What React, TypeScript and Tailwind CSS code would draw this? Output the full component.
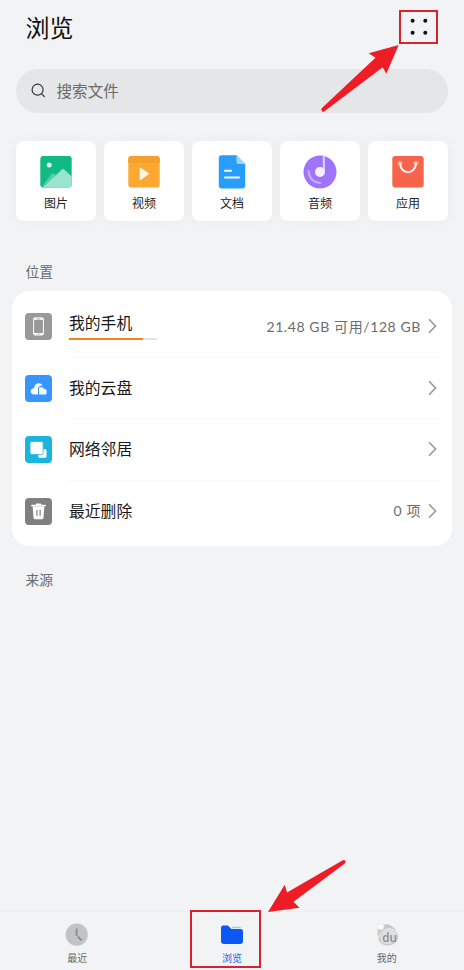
import type { ReactNode } from 'react';

const categories = [
  { label: '图片', icon: <PictureIcon /> },
  { label: '视频', icon: <VideoIcon /> },
  { label: '文档', icon: <DocumentIcon /> },
  { label: '音频', icon: <AudioIcon /> },
  { label: '应用', icon: <AppIcon /> },
];

function PictureIcon() {
  return (
    <svg width="34" height="34" viewBox="0 0 34 34">
      <rect x="1.3" y="1" width="31.4" height="31.4" rx="3" fill="#0fbb83" />
      <path d="M4 30.5 L12.5 19 Q13.8 17.5 15.2 18.8 L19 22 L12 32.4 H4Z" fill="#52cfa4" />
      <path d="M4 32.4 L22.3 15 Q24 13.2 25.7 15 L32.7 21.5 V29.4 Q32.7 32.4 29.7 32.4Z" fill="#98e4cc" />
      <circle cx="10.2" cy="10" r="2.5" fill="#e2f8f0" />
    </svg>
  );
}

function VideoIcon() {
  return (
    <svg width="34" height="34" viewBox="0 0 34 34">
      <rect x="1.3" y="1" width="31.4" height="31.4" rx="3" fill="#fca831" />
      <path d="M1.3 8 V4 Q1.3 1 4.3 1 H29.7 Q32.7 1 32.7 4 V8Z" fill="#f79f2c" />
      <path d="M13.3 13.3 L21.5 18.8 L13.3 24.5Z" fill="#fff6e6" stroke="#fff6e6" strokeWidth="1.2" strokeLinejoin="round" />
    </svg>
  );
}

function DocumentIcon() {
  return (
    <svg width="34" height="34" viewBox="0 0 34 34">
      <path d="M6.8 0.3 H21.5 L30.2 9 V30.5 Q30.2 33.5 27.2 33.5 H6.8 Q3.8 33.5 3.8 30.5 V3.3 Q3.8 0.3 6.8 0.3Z" fill="#279dfc" />
      <path d="M21.5 0 L30.5 9 H23.5 Q21.5 9 21.5 7Z" fill="#9ed5fc" />
      <path d="M10 15.8 H16 M10 22.6 H24" stroke="#fff" strokeWidth="2" strokeLinecap="round" />
    </svg>
  );
}

function AudioIcon() {
  return (
    <svg width="34" height="34" viewBox="0 0 34 34">
      <circle cx="17" cy="17" r="16.5" fill="#9e75fa" />
      <path d="M5.6 16 Q6 26.8 17.3 28" fill="none" stroke="#c4abfc" strokeWidth="2.2" strokeLinecap="round" />
      <path d="M19.8 0.8 L22 1.4 V17 H19.8Z" fill="#dacbfd" />
      <circle cx="17" cy="17" r="5" fill="#f5eeff" />
    </svg>
  );
}

function AppIcon() {
  return (
    <svg width="34" height="34" viewBox="0 0 34 34">
      <rect x="1.3" y="1" width="31.4" height="31.4" rx="3" fill="#f7634b" />
      <circle cx="9" cy="8.3" r="2.5" fill="#fc9c88" />
      <circle cx="25" cy="8.3" r="2.5" fill="#fc9c88" />
      <path d="M9 8.5 C10 20 24 20 25 8.5" fill="none" stroke="#fff1ec" strokeWidth="2.1" strokeLinecap="round" />
    </svg>
  );
}

function PhoneIcon() {
  return (
    <svg width="27" height="27" viewBox="0 0 27 27">
      <rect width="27" height="27" rx="4" fill="#999" />
      <rect x="8.6" y="4.8" width="9.8" height="17.2" rx="1.5" fill="none" stroke="#fff" strokeWidth="1" />
      <path d="M8.6 6 H18.4 M8.6 20.9 H18.4" stroke="#fff" strokeWidth="1.7" />
      <path d="M12.3 5.9 H14.7 M12.7 21 H14.3" stroke="#999" strokeWidth="0.9" />
    </svg>
  );
}

function CloudIcon() {
  return (
    <svg width="27" height="27" viewBox="0 0 27 27">
      <rect width="27" height="27" rx="4" fill="#3795fb" />
      <path d="M13 19.5 H9.2 C4.5 19.5 4.6 13.4 9 13 C9.7 7.3 16 6.9 17.4 10.6 C14.7 10.4 13.1 11.8 13 14Z" fill="#fff" />
      <path d="M14 19.5 V13.4 Q14 12.3 15.1 12.3 H17.7 L19.4 14.3 H20.3 Q21.5 14.3 21.5 15.5 V18.3 Q21.5 19.5 20.3 19.5Z" fill="#fff" />
    </svg>
  );
}

function NetworkIcon() {
  return (
    <svg width="27" height="27" viewBox="0 0 27 27">
      <rect width="27" height="27" rx="4" fill="#1ab5df" />
      <rect x="13.3" y="13.3" width="8.2" height="8.5" rx="1.2" fill="#fff" />
      <rect x="5" y="5.4" width="13.2" height="13.2" rx="1.8" fill="#fff" stroke="#1ab5df" strokeWidth="0.8" />
    </svg>
  );
}

function TrashIcon() {
  return (
    <svg width="27" height="27" viewBox="0 0 27 27">
      <rect width="27" height="27" rx="4" fill="#808080" />
      <path d="M7 7.6 H20" stroke="#fff" strokeWidth="1.8" strokeLinecap="round" />
      <path d="M10.5 7 L11.4 5.5 H15.6 L16.5 7Z" fill="#fff" />
      <path d="M7.7 8.5 H19.3 L18.5 19.8 Q18.4 21.2 17 21.2 H10 Q8.6 21.2 8.5 19.8Z" fill="#fff" />
      <path d="M11.9 12 V17.7 M15.1 12 V17.7" stroke="#777" strokeWidth="1.1" />
    </svg>
  );
}

function Chevron() {
  return (
    <svg width="9" height="16" viewBox="0 0 9 16" className="ml-[7px]">
      <path d="M1 1.2 L7.6 8 L1 14.8" fill="none" stroke="#959595" strokeWidth="1.5" />
    </svg>
  );
}

type RowProps = {
  icon: ReactNode;
  label: string;
  value?: string;
  progress?: number;
  last?: boolean;
};

function LocationRow({ icon, label, value, progress, last }: RowProps) {
  return (
    <div className="flex h-[61.5px] items-center pl-[13px] pr-3">
      {icon}
      <div
        className={`ml-[17px] flex h-full flex-1 items-center justify-between border-b pr-[3px] ${
          last ? 'border-transparent' : 'border-[#f8f8f8]'
        }`}
      >
        <div>
          <div className="text-[15.8px] leading-5 text-[#181818]">{label}</div>
          {progress !== undefined && (
            <div className="mt-[5px] h-0.5 w-[88px] bg-[#e3e3e3]">
              <div className="h-full bg-[#fa8019]" style={{ width: `${progress}%` }} />
            </div>
          )}
        </div>
        <div className="flex items-center text-[14px] text-[#6c6c6c]">
          {value && <span className="font-[Lato,'Noto_Sans_CJK_SC',sans-serif] tracking-[0.6px]">{value}</span>}
          <Chevron />
        </div>
      </div>
    </div>
  );
}

function ClockIcon() {
  return (
    <svg width="24" height="24" viewBox="0 0 24 24">
      <circle cx="11.7" cy="11.7" r="11.1" fill="#c1c3c4" />
      <path d="M11.6 5.5 V13" stroke="#86888a" strokeWidth="1.8" />
      <path d="M12.8 13.6 L16.6 17.4" stroke="#86888a" strokeWidth="2" />
    </svg>
  );
}

function FolderIcon() {
  return (
    <svg width="24" height="24" viewBox="0 0 24 24">
      <path d="M11.5 3.8 H19.5 Q21 3.8 21 5.2 H12.5Z" fill="#a9c5fb" />
      <path d="M1 5 Q1 2.6 3.4 2.6 H7.2 Q8.2 2.6 8.9 3.4 L11.3 6 H20.6 Q23 6 23 8.4 V18.6 Q23 21 20.6 21 H3.4 Q1 21 1 18.6Z" fill="#0b58f5" />
    </svg>
  );
}

function ProfileIcon() {
  return (
    <svg width="28" height="28" viewBox="0 0 28 28">
      <path d="M5 8 Q6 3 15 3.3 Q21 5 25 13 C26 20 21 24.5 14.5 24.5 C7 24.5 3 18 5 8Z" fill="#c6c7c8" />
      <circle cx="7.8" cy="5.6" r="3.2" fill="#fafafa" stroke="#e2e3e4" strokeWidth="0.6" />
      <path d="M7 17 Q9 10 15.5 8.5 Q21 8.5 24.5 14 L22 20.5 Q15 25 8.5 21.5Z" fill="#dfe0e1" />
      <path d="M5 17.5 Q7 10 15.5 7.5 Q22 8 26 14" fill="none" stroke="#f6f7f8" strokeWidth="1" />
      <text
        x="9.3"
        y="20.5"
        fontSize="13"
        fontWeight="600"
        fontFamily="Open Sans, sans-serif"
        fill="#8c8d8e"
        textLength="14.8"
        lengthAdjust="spacingAndGlyphs"
      >
        du
      </text>
    </svg>
  );
}

function NavItem({ icon, label, active }: { icon: ReactNode; label: string; active?: boolean }) {
  return (
    <div className="flex flex-1 flex-col items-center">
      <div className="flex h-7 items-center">{icon}</div>
      <span className={`mt-px text-[10px] leading-4 ${active ? 'text-[#2464ee]' : 'text-[#666]'}`}>{label}</span>
    </div>
  );
}

export default function App() {
  return (
    <div className="relative flex h-[970px] w-[464px] flex-col overflow-hidden bg-[#f1f3f5] font-['Noto_Sans_CJK_SC',sans-serif]">
      {/* Header */}
      <header className="flex h-[69px] items-start justify-between pl-[25.5px] pr-[26px] pt-[10px]">
        <h1 className="-mt-px text-2xl leading-9 text-[#111]">浏览</h1>
        <button className="flex h-[34px] w-[39px] items-center justify-center border-2 border-[#d8232f]">
          <svg width="20" height="20" viewBox="0 0 20 20" fill="#111">
            <circle cx="3.6" cy="3.8" r="2" />
            <circle cx="16.3" cy="3.8" r="2" />
            <circle cx="3.6" cy="15.8" r="2" />
            <circle cx="16.3" cy="15.8" r="2" />
          </svg>
        </button>
      </header>

      {/* Search */}
      <div className="mx-4 flex h-11 items-center rounded-full bg-[#e5e6e8] pl-[15px]">
        <svg width="16" height="16" viewBox="0 0 16 16" fill="none" stroke="#333" strokeWidth="1.2" strokeLinecap="round">
          <circle cx="6.6" cy="6.7" r="5.5" />
          <path d="M10.7 10.9 L13.4 13.6" />
        </svg>
        <span className="ml-[9.5px] text-[15.6px] text-[#6b6b6b]">搜索文件</span>
      </div>

      {/* Categories */}
      <div className="mx-4 mt-7 flex gap-2">
        {categories.map((item) => (
          <div
            key={item.label}
            className="flex h-20 w-20 flex-col items-center rounded-lg bg-white pt-[14px] shadow-[0_0_12px_rgba(0,0,0,0.04)]"
          >
            {item.icon}
            <span className="mt-[5px] text-xs leading-[18px] text-[#222]">{item.label}</span>
          </div>
        ))}
      </div>

      {/* Locations */}
      <h2 className="mt-10 pl-[25.5px] text-[13.8px] leading-5 text-[#6b6b6b]">位置</h2>
      <section className="mx-3 mt-[10px] h-[255px] rounded-[18px] bg-white pt-[5px]">
        <LocationRow icon={<PhoneIcon />} label="我的手机" value="21.48 GB 可用/128 GB" progress={84} />
        <LocationRow icon={<CloudIcon />} label="我的云盘" />
        <LocationRow icon={<NetworkIcon />} label="网络邻居" />
        <LocationRow icon={<TrashIcon />} label="最近删除" value="0 项" last />
      </section>
      <h2 className="mt-[23px] pl-[25.5px] text-[13.8px] leading-5 text-[#6b6b6b]">来源</h2>

      {/* Bottom navigation */}
      <nav className="mt-auto flex h-[59px] border-t border-[#eceef0] pt-[9px]">
        <NavItem icon={<ClockIcon />} label="最近" />
        <NavItem icon={<FolderIcon />} label="浏览" active />
        <NavItem icon={<ProfileIcon />} label="我的" />
      </nav>

      {/* Callouts */}
      <div className="absolute left-[190px] top-[910px] h-[58px] w-[71px] border-2 border-[#d8232f]" />
      <svg className="pointer-events-none absolute inset-0" width="464" height="970" viewBox="0 0 464 970" fill="#ee1c25">
        <path d="M398.7 45 L368.7 53.3 L375.5 57.8 L321.7 108.3 Q320.7 110 322 111.2 Q323.3 112.3 324.8 111 L382.7 67.2 L386.3 73.8Z" />
        <path d="M268 912 L284.7 884.8 L287 892.6 L342.8 860.3 Q344.5 859.6 345.4 860.8 Q346 862.3 344.8 863.4 L293.5 901.8 L299.5 907.8Z" />
      </svg>
    </div>
  );
}
